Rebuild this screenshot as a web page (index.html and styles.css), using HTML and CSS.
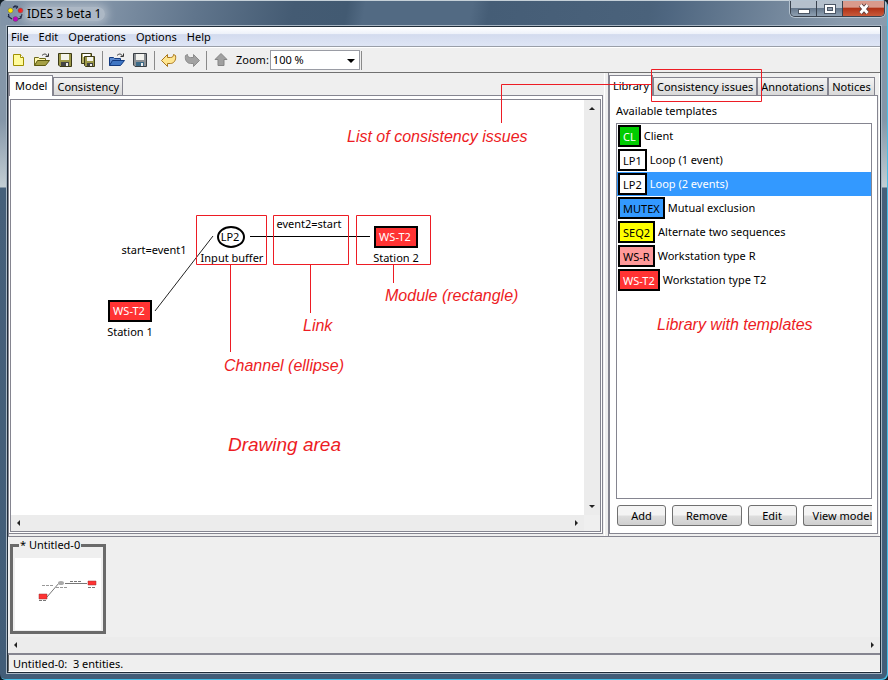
FILE: index.html
```html
<!DOCTYPE html>
<html lang="en">
<head>
<meta charset="utf-8">
<title>IDES 3 beta 1</title>
<link rel="stylesheet" href="styles.css">
</head>
<body>
<div class="window">
  <header class="titlebar">
    <svg class="app-icon" width="17" height="17" viewBox="0 0 17 17"><g fill="none" stroke="#1c2440"><path d="M6 2.500L8 1l3 .5M9 3.500L11 1.500M15 9l-1 4-3 1M13 11l1 2M5 14l-3-2-.5-3M1 11l1 1M8 .5v2" stroke-width="1.200"/></g><circle cx="3.500" cy="5.500" r="2.500" fill="#ffe800" stroke="#555" stroke-width=".5"/><circle cx="13.500" cy="5.500" r="2.500" fill="#f01010" stroke="#555" stroke-width=".5"/><circle cx="8.500" cy="14" r="2.500" fill="#c000c0" stroke="#555" stroke-width=".5"/></svg>
    <span class="title">IDES 3 beta 1</span>
    <div class="caption-buttons">
      <button class="cap" aria-label="Minimize"><svg width="14" height="14"><rect x="1.500" y="7.500" width="11" height="4" fill="#fff" stroke="#4b5665"/></svg></button>
      <button class="cap" aria-label="Maximize"><svg width="14" height="14"><rect x="1.500" y="2.500" width="11" height="9" fill="#fff" stroke="#4b5665"/><rect x="4.500" y="5.500" width="5" height="3" fill="#8d9aaa" stroke="#4b5665"/></svg></button>
      <button class="cap close" aria-label="Close"><svg width="14" height="14"><path d="M3.500 3l7 8M10.500 3l-7 8" stroke="#5b4040" stroke-width="4.600"/><path d="M3.500 3l7 8M10.500 3l-7 8" stroke="#fff" stroke-width="2.800"/></svg></button>
    </div>
  </header>
  <div class="client">
    <nav class="menubar"><button>File</button><button>Edit</button><button>Operations</button><button>Options</button><button>Help</button></nav>
    <div class="toolbar">
      <button class="tool" aria-label="New"><svg width="16" height="16"><path d="M2.500 2.500h7l3 3v8h-10z" fill="#fffb9c" stroke="#a09000"/><path d="M9.500 2.500v3h3" fill="#fff" stroke="#a09000"/></svg></button>
      <button class="tool" aria-label="Open"><svg width="16" height="16"><path d="M.500 13.500v-8h4l1 1h6v2" fill="#fff8b0" stroke="#6e6a1c"/><path d="M.500 13.500l3-5h12l-4 5z" fill="#a5a046" stroke="#5c5910"/><path d="M8 3.500c2-2 4-2 5.500.500M14.500 1.500v3h-3" fill="none" stroke="#333"/></svg></button>
      <button class="tool" aria-label="Save"><svg width="16" height="16"><path d="M1.500 1.500h13v13H3l-1.500-1.500z" fill="#9c9848" stroke="#3c3a18"/><path d="M4 2h8v6H4z" fill="#f4f4ec"/><path d="M4 10h8v4H4z" fill="#444"/><path d="M9 11h2v3H9z" fill="#eee"/></svg></button>
      <button class="tool" aria-label="Save all"><svg width="16" height="16"><path d="M1.500 1.500h10v10h-10z" fill="#b5b16a" stroke="#3c3a18"/><path d="M3 2h7v3H3z" fill="#fff"/><path d="M4.500 4.500h10v10h-9l-1-1z" fill="#9c9848" stroke="#3c3a18"/><path d="M7 5h6v4H7z" fill="#f4f4ec"/><path d="M7 11h6v3H7z" fill="#444"/><path d="M10 12h2v2h-2z" fill="#eee"/></svg></button>
      <i class="sep"></i>
      <button class="tool" aria-label="Import"><svg width="16" height="16"><path d="M.500 13.500v-8h4l1 1h6v2" fill="#5e8bd0" stroke="#123a80"/><path d="M.500 13.500l3-5h12l-4 5z" fill="#3f76c4" stroke="#123a80"/><path d="M8 3.500c2-2 4-2 5.500.500M14.500 1.500v3h-3" fill="none" stroke="#333"/></svg></button>
      <button class="tool" aria-label="Export"><svg width="16" height="16"><path d="M1.500 1.500h13v13H3l-1.500-1.500z" fill="#8c9094" stroke="#3a3f44"/><path d="M4 2h8v6H4z" fill="#f2f2ee"/><path d="M4 10h8v4H4z" fill="#3d6b88"/><path d="M9 11h2v3H9z" fill="#eee"/></svg></button>
      <i class="sep"></i>
      <button class="tool" aria-label="Undo"><svg width="16" height="16"><path d="M.500 8.500l6-6v3h3c2 0 3-1 3-3l2 1c1 5-2 8-5 8h-3v3z" fill="#ffe691" stroke="#a8761c"/></svg></button>
      <button class="tool" aria-label="Redo"><svg width="16" height="16"><path d="M15.500 8.500l-6-6v3h-3c-2 0-3-1-3-3l-2 1c-1 5 2 8 5 8h3v3z" fill="#a2a2a2" stroke="#8c8c8c"/></svg></button>
      <i class="sep"></i>
      <button class="tool" aria-label="Up"><svg width="16" height="16"><path d="M8 1.500l6 6h-3v6H5v-6H2z" fill="#a0a0a0" stroke="#858585"/></svg></button>
      <div class="zoom-group">
        <label for="zoom">Zoom:</label>
        <span class="select-box"><select id="zoom"><option>100 %</option></select></span>
        <i class="sep"></i>
      </div>
    </div>
    <main class="workspace">
      <section class="pane left">
        <div class="tabs"><button class="tab on">Model</button><button class="tab">Consistency</button></div>
        <div class="tab-body editor">
          <div class="scroller">
            <div class="canvas">
              <svg class="diagram" width="560" height="400" viewBox="0 1 560 400">
                <g stroke="#222" fill="none"><path d="M144 212L202 137"/><path d="M239 137.500H359" stroke="#000"/></g>
                <ellipse cx="220" cy="138" rx="13" ry="10" fill="#fff" stroke="#000" stroke-width="2"/>
                <g fill="#f33" stroke="#000" stroke-width="2"><rect x="98" y="202" width="42" height="20"/><rect x="364" y="128" width="42" height="20"/></g>
                <g text-anchor="middle"><text x="219" y="142">LP2</text><text x="221" y="163">Input buffer</text><text x="143" y="155">start=event1</text><text x="298" y="129">event2=start</text><text x="119" y="237">Station 1</text><text x="385" y="163">Station 2</text><g class="inverse"><text x="118" y="216">WS-T2</text><text x="384" y="142">WS-T2</text></g></g>
              </svg>
            </div>
            <div class="vbar"><i class="arrow up"></i><i class="arrow down"></i></div>
            <div class="hbar"><i class="arrow prev"></i><i class="arrow next"></i></div>
          </div>
        </div>
      </section>
      <section class="pane right">
        <div class="tabs"><button class="tab on">Library</button><button class="tab">Consistency issues</button><button class="tab">Annotations</button><button class="tab">Notices</button></div>
        <div class="tab-body library">
          <h2>Available templates</h2>
          <ul class="templates">
            <li><b class="chip green">CL</b>Client</li>
            <li><b class="chip">LP1</b>Loop (1 event)</li>
            <li class="selected"><b class="chip">LP2</b>Loop (2 events)</li>
            <li><b class="chip blue">MUTEX</b>Mutual exclusion</li>
            <li><b class="chip yellow">SEQ2</b>Alternate two sequences</li>
            <li><b class="chip pink">WS-R</b>Workstation type R</li>
            <li><b class="chip red">WS-T2</b>Workstation type T2</li>
          </ul>
          <div class="actions"><button>Add</button><button>Remove</button><button>Edit</button><button class="clipped">View model</button></div>
        </div>
      </section>
    </main>
    <section class="filmstrip">
      <fieldset class="thumb"><legend>* Untitled-0</legend>
        <svg width="86" height="72"><rect width="86" height="72" fill="#fff"/><path d="M32 39L44 25M50 25.500H72" stroke="#777" fill="none"/><path d="M27 27.500h11M41 29.500h12" stroke="#999" stroke-dasharray="3 1"/><path d="M55 23.500h12M73 29.500h8M24 42.500h8" stroke="#777" stroke-dasharray="3 1"/><ellipse cx="46" cy="25" rx="3" ry="2" fill="#aaa"/><path d="M24 36h8v5h-8zM73 23h8v4h-8z" fill="#f33" stroke="#933" stroke-width=".5"/></svg>
      </fieldset>
      <div class="hbar"><i class="arrow prev"></i><i class="arrow next"></i></div>
    </section>
    <footer class="status">Untitled-0:&nbsp; 3 entities.</footer>
  </div>
  <svg class="callouts" width="888" height="680">
    <g fill="none" stroke="#ed1c24"><path d="M651.500 69.500h110v32h-110zM652 84.500H501.500V123M196.500 215.500h70v49h-70zM273.500 215.500h75v49h-75zM356.500 215.500h74v49h-74zM230.500 265V352M310.500 265V313M393.500 265V283"/></g>
    <text x="347" y="142">List of consistency issues</text><text x="385" y="301">Module (rectangle)</text><text x="303" y="331">Link</text><text x="224" y="371">Channel (ellipse)</text><text x="657" y="330">Library with templates</text><text class="big" x="228" y="451">Drawing area</text>
  </svg>
</div>
</body>
</html>
```
FILE: styles.css
```css
* { box-sizing: border-box; }
body { margin: 0; background: #101c24; font: 11px/14px "Noto Sans", sans-serif; color: #000; }
button, select { font: inherit; color: inherit; margin: 0; }
svg { display: block; }
.window { position: relative; min-height: 100vh; display: flex; flex-direction: column; padding: 0 7px 7px; border-radius: 7px 7px 6px 6px; overflow: hidden; background: linear-gradient(#8496a8 0, #8496a8 120px, #c3ced4 187px, #46607a 188px, #425d78 100%); box-shadow: inset -1px -1px 0 #45c0e8; }
.titlebar { height: 26px; margin: 0 -6px; padding: 0 2px 0 6px; display: flex; align-items: center; gap: 4px; background: linear-gradient(100deg, #8294a8 0, #8092a6 12%, #60758c 22%, #445b73 33%, #425a72 39%, #526a83 41%, #526a83 53%, #455d76 55%, #4a627b 73%, #4e6680 75%, #8a9bad 95%); border-top: 1px solid #c5d0d8; }
.title { font-size: 12px; margin: 0 0 0 -3px; padding: 0 4px 0 2px; border-radius: 8px; background: rgba(255, 255, 255, .35); box-shadow: 0 0 8px 3px rgba(255, 255, 255, .35); }
.caption-buttons { margin-left: auto; align-self: flex-start; display: flex; border: 1px solid #39424e; border-top: 0; border-radius: 0 0 5px 5px; box-shadow: 0 0 0 1px #b4c2cf; overflow: hidden; }
.cap { width: 26px; height: 15px; padding: 0; border: 0; border-right: 1px solid #39424e; display: grid; place-items: center; background: linear-gradient(#b5c0cc 0 45%, #66788c 50%, #8fa0b2); }
.close { width: 41px; border: 0; background: linear-gradient(#d99a8c 0 40%, #b03318 50%, #c95a3a); }
.client { flex: 1; display: flex; flex-direction: column; background: #efefef; border: 1px solid #1f2c38; box-shadow: 0 0 0 1px #a8b6c4; }
.menubar { height: 20px; display: flex; gap: 10px; padding: 0 3px; background: linear-gradient(#fff 0, #eef2fa 35%, #d3dbee 40%, #dfe6f6); border-bottom: 1px solid #9a9fa8; }
.menubar button { border: 0; background: none; padding: 0; }
.toolbar { height: 26px; display: flex; align-items: center; gap: 7px; padding: 0 3px; border-top: 1px solid #fff; border-bottom: 1px solid #707070; }
.tool { border: 0; padding: 0; background: none; width: 16px; height: 16px; }
.sep { width: 1px; height: 19px; background: #8a8a8a; margin: 0 -1px; }
.zoom-group { display: flex; align-items: center; gap: 1px; }
.zoom-group .sep { margin: 0; }
.select-box { position: relative; }
.select-box::after { content: ""; position: absolute; right: 5px; top: 9px; border: 4px solid transparent; border-top-color: #000; border-bottom: 0; }
select { appearance: none; display: block; width: 90px; height: 20px; padding: 0 2px; border: 1px solid #9a9ca4; border-radius: 0; background: #fff; }
.workspace { flex: 1; display: grid; grid-template-columns: minmax(0, 1fr) 272px; gap: 3px; }
.pane { min-width: 0; display: flex; flex-direction: column; border-right: 1px solid #fff; border-left: 1px solid #858590; padding: 2px 1px 2px 0; }
.tabs { display: flex; height: 20px; align-items: flex-end; }
.tab { height: 18px; border: 1px solid #858590; border-bottom: 0; padding: 0 3px; background: linear-gradient(#f4f4f4, #d8d8d8); white-space: nowrap; }
.tab.on { height: 21px; background: #fff; margin-bottom: -1px; position: relative; }
.left .tab.on { padding: 0 5px; }
.tab-body { flex: 1; border: 1px solid #858590; padding: 3px 1px 1px; background: #fff; display: flex; flex-direction: column; }
.editor { border-left: 0; }
.scroller { flex: 1; display: grid; grid-template: 1fr 16px / 1fr 16px; border: 1px solid #858590; background: #efefef; }
.canvas { background: #fff; overflow: hidden; }
.diagram text { font-size: 11px; }
.inverse { fill: #fff; }
.vbar, .hbar { display: flex; justify-content: space-between; align-items: center; background: #ececec; padding: 5px 6px; }
.vbar { flex-direction: column; padding: 7px 5px; }
.hbar { height: 16px; }
.arrow { border: 3px solid transparent; }
.up { border-bottom-color: #222; border-top: 0; }
.down { border-top-color: #222; border-bottom: 0; }
.prev { border-right-color: #222; border-left: 0; }
.next { border-left-color: #222; border-right: 0; }
.library { padding: 8px 5px 7px 6px; }
h2 { margin: 0 0 5px; font: inherit; }
.templates { flex: 1; list-style: none; margin: 0; padding: 0; border: 1px solid #858590; }
.templates li { height: 24px; display: flex; align-items: center; gap: 3px; padding-left: 1px; }
.selected { background: #39f; color: #fff; }
.chip { height: 22px; border: 2px solid #000; padding: 3px 3px 0; font-weight: normal; color: #000; background: #fff; }
.green { background: #0c0; color: #fff; }
.blue { background: #39f; }
.yellow { background: #ff0; }
.pink { background: #f99; }
.red { background: #f33; color: #fff; }
.actions { display: flex; gap: 6px; padding: 6px 0 0 1px; overflow: hidden; }
.actions button { flex: none; min-width: 49px; height: 21px; padding: 0 13px; border: 1px solid #707070; border-radius: 3px; background: linear-gradient(#f4f4f4 0 48%, #dedede 52%, #cfcfcf); }
.actions .clipped { flex: 1 0 0; padding: 0 0 0 9px; border-right: 0; border-radius: 3px 0 0 3px; text-align: left; white-space: nowrap; }
.filmstrip { height: 119px; border-top: 1px solid #858590; border-bottom: 2px solid #858590; display: flex; flex-direction: column; justify-content: space-between; }
.thumb { width: 96px; height: 96px; margin: 1px 2px; padding: 6px 2px 0; border: 3px solid #6a6a6a; }
.thumb legend { padding: 0 1px; margin-left: 4px; white-space: nowrap; }
.status { height: 17px; padding: 0 4px; line-height: 17px; border-left: 1px solid #666; border-bottom: 1px solid #fff; }
.callouts { position: absolute; left: 0; top: 0; pointer-events: none; fill: #ed1c24; font: italic 16px "Liberation Sans", sans-serif; }
.big { font-size: 19px; }
```
